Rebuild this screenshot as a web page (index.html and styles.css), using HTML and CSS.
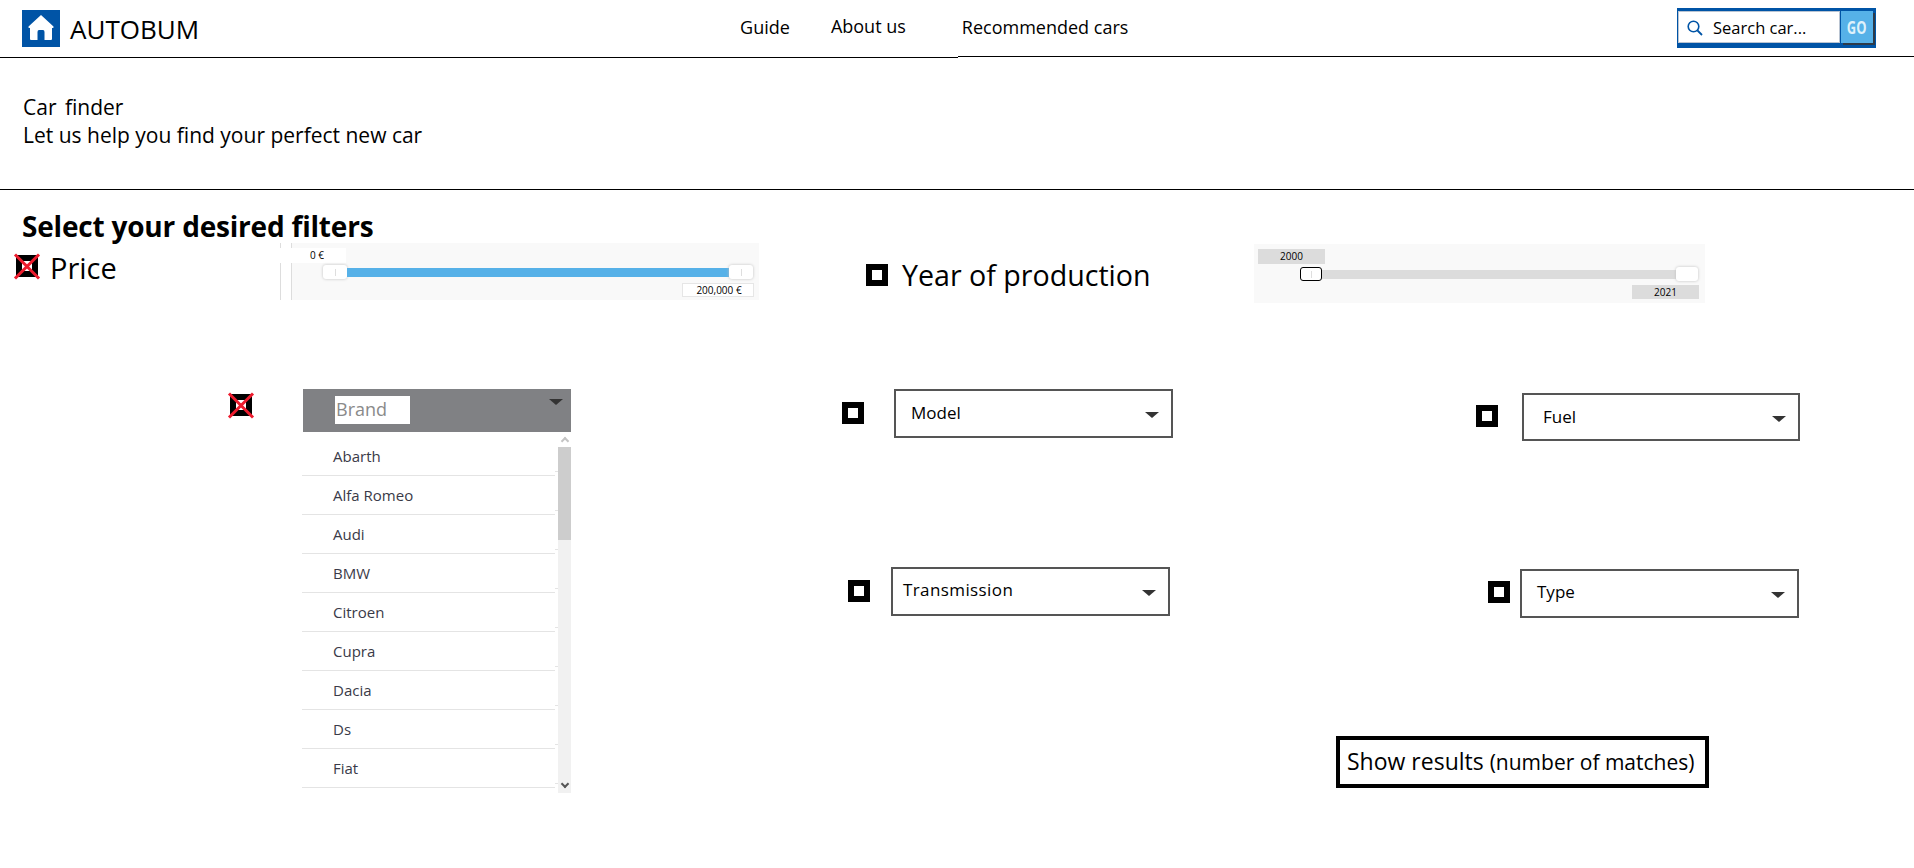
FILE: index.html
```html
<!DOCTYPE html>
<html lang="en">
<head>
    <meta charset="UTF-8">
    <meta name="viewport" content="width=device-width, initial-scale=1.0">
    <title>Car finder | Autobum</title>
    <link rel="stylesheet" href="styles.css">
</head>
<body>

    <header class="topbar">
        <a class="logo" href="#">
            <svg class="logo-icon" viewBox="0 0 38 37">
                <rect width="38" height="37" fill="#0054a6"/>
                <path d="M19 5 L31.500 16.500 Q32 18 30.500 18 L30 18 V29 Q30 30 29 30 H9 Q8 30 8 29 V18 L7.500 18 Q6 18 6.500 16.500 Z" fill="#fff"/>
                <path d="M15.500 30 V22 Q15.500 20 17 20 H21 Q22.500 20 22.500 22 V30 Z" fill="#0054a6"/>
            </svg>
            <span class="logo-text">AUTOBUM</span>
        </a>
        <nav class="nav">
            <a href="#">Guide</a>
            <a class="nav-about" href="#">About us</a>
            <a href="#">Recommended cars</a>
        </nav>
        <form class="search">
            <div class="search-field">
                <svg class="search-icon" viewBox="0 0 16 16">
                    <circle cx="6.500" cy="6.500" r="5.300" fill="none" stroke="#0054a6" stroke-width="1.600"/>
                    <path d="M10.500 10.500 L15 15" stroke="#0054a6" stroke-width="1.800"/>
                </svg>
                <span>Search car...</span>
            </div>
            <button class="search-go" type="button"><span>GO</span></button>
        </form>
    </header>
    <div class="header-rule">
        <span class="rule-left"></span>
        <span class="rule-right"></span>
    </div>

    <section class="intro">
        <p><span class="intro-car">Car</span> finder</p>
        <p>Let us help you find your perfect new car</p>
    </section>

    <main class="filters">
        <h2>Select your desired filters</h2>

        <div class="range-row">
            <div class="check check-on check-price"></div>
            <span class="range-label range-label-price">Price</span>
            <div class="slider slider-price">
                <div class="slider-top"><span class="tag tag-white">0 €</span></div>
                <div class="track-row">
                    <span class="thumb"></span>
                    <span class="track track-blue"></span>
                    <span class="thumb"></span>
                </div>
                <div class="slider-bottom"><span class="tag tag-white tag-wide">200,000 €</span></div>
            </div>

            <div class="check check-year"></div>
            <span class="range-label range-label-year">Year of production</span>
            <div class="slider slider-year">
                <div class="slider-top"><span class="tag tag-grey">2000</span></div>
                <div class="track-row">
                    <span class="thumb thumb-active"></span>
                    <span class="track track-grey"></span>
                    <span class="thumb"></span>
                </div>
                <div class="slider-bottom"><span class="tag tag-grey">2021</span></div>
            </div>
        </div>

        <div class="lower">
            <div class="brand-col">
                <div class="check check-on check-brand"></div>
                <div class="brand-box">
                    <div class="brand-head">
                        <span class="brand-input">Brand</span>
                        <span class="arrow arrow-brand"></span>
                    </div>
                    <div class="brand-body">
                        <ul class="brand-list">
                            <li>Abarth</li>
                            <li>Alfa Romeo</li>
                            <li>Audi</li>
                            <li>BMW</li>
                            <li>Citroen</li>
                            <li>Cupra</li>
                            <li>Dacia</li>
                            <li>Ds</li>
                            <li>Fiat</li>
                        </ul>
                        <div class="scrollbar">
                            <span class="scroll-up"><i class="chevron chevron-up"></i></span>
                            <span class="scroll-thumb"></span>
                            <span class="scroll-down"><i class="chevron chevron-down"></i></span>
                        </div>
                    </div>
                </div>
            </div>

            <div class="select-col select-col-mid">
                <div class="select-row select-model">
                    <div class="check"></div>
                    <div class="select"><span>Model</span><span class="arrow"></span></div>
                </div>
                <div class="select-row select-transmission">
                    <div class="check"></div>
                    <div class="select"><span>Transmission</span><span class="arrow"></span></div>
                </div>
            </div>

            <div class="select-col select-col-right">
                <div class="select-row select-fuel">
                    <div class="check"></div>
                    <div class="select"><span>Fuel</span><span class="arrow"></span></div>
                </div>
                <div class="select-row select-type">
                    <div class="check"></div>
                    <div class="select"><span>Type</span><span class="arrow"></span></div>
                </div>
                <button class="show-results" type="button">Show results <small>(number of matches)</small></button>
            </div>
        </div>
    </main>

</body>
</html>
```
FILE: styles.css
```css
* {
    box-sizing: border-box;
}
body {
    margin: 0;
    width: 1914px;
    height: 868px;
    overflow: hidden;
    background: white;
    color: black;
    font-family: "Open Sans", sans-serif;
}
a {
    color: inherit;
    text-decoration: none;
}
p, h2, ul {
    margin: 0;
    padding: 0;
}

/* header */
.topbar {
    display: flex;
    height: 56px;
    padding: 0 38px 0 22px;
}
.logo {
    display: flex;
    height: 37px;
    margin-top: 10px;
}
.logo-icon {
    width: 38px;
    height: 37px;
}
.logo-text {
    margin-left: 10px;
    padding-top: 1px;
    font-size: 26px;
    line-height: 37px;
}
.nav {
    display: flex;
    gap: 41px;
    margin-left: 541px;
    padding-top: 15px;
    font-size: 18px;
    line-height: 24px;
}
.nav a:last-child {
    margin-left: 15px;
}
.nav-about {
    margin-top: -1px;
}
.search {
    display: flex;
    width: 199px;
    height: 40px;
    margin-top: 8px;
    margin-left: auto;
    padding: 3px 3px 5px 1px;
    background: #0054a6;
}
.search-field {
    display: flex;
    align-items: center;
    width: 163px;
    padding: 1px 0 0 8px;
    background: white;
    border: 1px solid #b9c4d2;
    font-size: 16.500px;
}
.search-icon {
    width: 16px;
    height: 16px;
    margin-right: 10px;
}
.search-go {
    width: 32px;
    height: 32px;
    margin-left: 1px;
    padding: 0;
    border: none;
    background: #56b1e8;
    box-shadow: 2px 2px 0 #2d3a48;
    color: #dff1fb;
    font-family: "Open Sans", sans-serif;
    font-size: 18px;
    font-weight: bold;
}
.search-go span {
    display: inline-block;
    transform: scaleX(0.72);
}
.header-rule {
    display: flex;
    height: 2px;
}
.rule-left {
    width: 958px;
    height: 1px;
    margin-top: 1px;
    background: black;
}
.rule-right {
    flex: 1;
    height: 1px;
    background: black;
}

/* intro */
.intro {
    height: 132px;
    padding: 35px 0 0 23px;
    border-bottom: 1px solid black;
    font-size: 21px;
    line-height: 28px;
}
.intro-car {
    margin-right: 3px;
}

/* filters */
.filters {
    padding-top: 18px;
}
.filters h2 {
    margin-left: 22px;
    font-size: 28px;
    line-height: 36px;
    font-weight: bold;
    letter-spacing: -0.2px;
}

/* checkboxes */
.check {
    position: relative;
    flex: none;
    width: 22px;
    height: 22px;
    border: 6px solid black;
    background: white;
}
.check-on::before,
.check-on::after {
    content: "";
    position: absolute;
    left: -12px;
    top: 4px;
    width: 34px;
    height: 3px;
    background: #ed1c2e;
    transform: rotate(45deg);
}
.check-on::after {
    transform: rotate(-45deg);
}

/* sliders */
.range-row {
    display: flex;
    align-items: flex-start;
    height: 60px;
}
.check-price {
    margin: 11px 0 0 16px;
}
.range-label {
    font-size: 29px;
    line-height: 36px;
}
.range-label-price {
    width: 241px;
    margin: 6px 0 0 12px;
}
.range-label-year {
    width: 352px;
    margin: 13px 0 0 14px;
    font-size: 28.600px;
}
.check-year {
    margin: 20px 0 0 107px;
}
.slider {
    flex: none;
    background: #f9f9f9;
    padding: 5px 6px 0 4px;
}
.slider-price {
    width: 468px;
    height: 57px;
    margin-top: -1px;
    box-shadow: -10px 0 0 white, -11px 0 0 #ddd;
    border-left: 1px solid #ddd;
}
.slider-year {
    width: 451px;
    height: 59px;
}
.slider-top {
    height: 15px;
    display: flex;
}
.slider-bottom {
    display: flex;
    justify-content: flex-end;
    margin-top: 4px;
}
.tag {
    display: block;
    font-size: 10px;
    line-height: 14px;
    text-align: center;
}
.tag-white {
    width: 72px;
    margin-left: -22px;
    padding-left: 14px;
    background: white;
}
.tag-wide {
    margin-left: 0;
    margin-right: -1px;
    padding-left: 2px;
    border: 1px solid #e6e6e6;
    line-height: 12px;
}
.tag-grey {
    width: 67px;
    background: #dcdcdc;
}
.track-row {
    display: flex;
    align-items: center;
    height: 14px;
    margin-top: 2px;
}
.slider-price .track-row {
    margin-left: 27px;
}
.slider-year .track-row {
    margin: 3px 1px 0 42px;
}
.track {
    flex: 1;
    height: 9px;
}
.track-blue {
    background: #56b1e8;
}
.track-grey {
    background: #dcdcdc;
}
.thumb {
    display: flex;
    align-items: center;
    justify-content: center;
    flex: none;
    width: 24px;
    height: 14px;
    background: white;
    border-radius: 3px;
    box-shadow: 0 0 3px #bdbdbd;
}
.thumb::after {
    content: "";
    width: 1px;
    height: 7px;
    background: #dedede;
}
.thumb-active {
    border: 1px solid black;
    box-shadow: none;
}
.slider-year .thumb {
    width: 22px;
}
.slider-year .thumb:last-child::after {
    display: none;
}

/* lower part */
.lower {
    display: flex;
    align-items: flex-start;
    margin-top: 85px;
}
.brand-col {
    display: flex;
    width: 842px;
    padding-left: 230px;
}
.check-brand {
    margin-top: 5px;
}
.brand-box {
    width: 268px;
    margin-left: 51px;
}
.brand-head {
    display: flex;
    justify-content: space-between;
    height: 43px;
    padding: 7px 8px 0 32px;
    background: #808184;
}
.brand-input {
    width: 75px;
    height: 28px;
    padding-left: 1px;
    background: white;
    color: #8a8a8a;
    font-size: 18px;
    line-height: 27px;
}
.brand-body {
    display: flex;
    height: 361px;
}
.brand-list {
    width: 253px;
    margin-left: -1px;
    padding-top: 5px;
    list-style: none;
}
.brand-list li {
    position: relative;
    height: 39px;
    padding-left: 31px;
    border-bottom: 1px solid #e4e4e4;
    color: #3a3a48;
    font-size: 15px;
    line-height: 38px;
}
.brand-list li::after {
    content: "";
    position: absolute;
    right: -3px;
    bottom: 3px;
    width: 3px;
    height: 1px;
    background: #e4e4e4;
}
.scrollbar {
    display: flex;
    flex-direction: column;
    width: 13px;
    margin-left: 3px;
    background: #f1f1f1;
}
.scroll-up {
    display: flex;
    justify-content: center;
    height: 15px;
    padding-top: 6px;
    background: white;
}
.scroll-thumb {
    height: 93px;
    background: #cdcdcd;
}
.scroll-down {
    display: flex;
    justify-content: center;
    margin-top: auto;
    height: 36px;
    padding-top: 24px;
}
.chevron {
    display: block;
    width: 6px;
    height: 6px;
    border-left: 2px solid #c4c4c4;
    border-top: 2px solid #c4c4c4;
    transform: rotate(45deg);
}
.chevron-down {
    border-color: #555;
    transform: rotate(225deg);
}

/* dropdowns */
.select-col {
    display: flex;
    flex-direction: column;
    align-items: flex-start;
}
.select-col-mid {
    width: 634px;
}
.select-row {
    display: flex;
    align-items: flex-start;
}
.select {
    display: flex;
    justify-content: space-between;
    width: 279px;
    height: 49px;
    padding-right: 12px;
    border: 2px solid #555;
    font-size: 17px;
    line-height: 44px;
}
.arrow {
    width: 0;
    height: 0;
    border-left: 7px solid transparent;
    border-right: 7px solid transparent;
    border-top: 6px solid #333;
}
.select .arrow {
    margin-top: 21px;
}
.arrow-brand {
    margin-top: 3px;
}
.select-model .check {
    margin-top: 13px;
}
.select-model .select {
    margin-left: 30px;
    padding-left: 15px;
}
.select-transmission {
    margin: 129px 0 0 6px;
}
.select-transmission .check {
    margin-top: 13px;
}
.select-transmission .select {
    margin-left: 21px;
    padding-left: 10px;
    line-height: 41px;
    letter-spacing: 0.4px;
}
.select-fuel {
    margin-top: 4px;
}
.select-fuel .check {
    margin-top: 12px;
}
.select-fuel .select {
    width: 278px;
    height: 48px;
    margin-left: 24px;
    padding-left: 19px;
}
.select-type {
    margin: 128px 0 0 12px;
}
.select-type .check {
    margin-top: 12px;
}
.select-type .select {
    margin-left: 10px;
    padding-left: 15px;
    line-height: 42px;
}
.show-results {
    width: 373px;
    height: 52px;
    margin: 118px 0 0 -140px;
    padding: 0 0 3px 7px;
    border: 4px solid black;
    background: white;
    font-family: "Open Sans", sans-serif;
    font-size: 23px;
    text-align: left;
}
.show-results small {
    font-size: 21px;
}
```
